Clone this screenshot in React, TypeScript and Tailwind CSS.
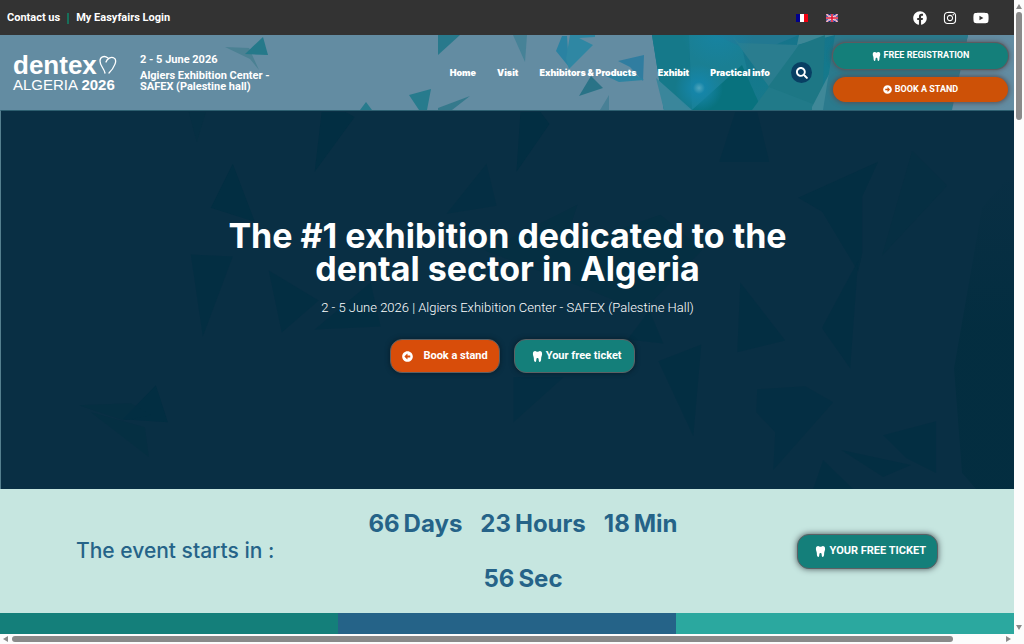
import { FaArrowAltCircleLeft, FaArrowAltCircleRight, FaFacebook, FaInstagram, FaSearch, FaYoutube } from "react-icons/fa";

const navItems = ["Home", "Visit", "Exhibitors & Products", "Exhibit", "Practical info"];

const countdown = [
  { value: "66", label: "Days" },
  { value: "23", label: "Hours" },
  { value: "18", label: "Min" },
  { value: "56", label: "Sec" },
];

function Tooth({ className }: { className: string }) {
  return (
    <svg viewBox="0 0 12 12" fill="currentColor" className={className} aria-hidden="true">
      <path d="M1 3.500C.8 1 2 0 3.500 0 4.500 0 5 .9 6 .9S7.500 0 8.500 0C10 0 11.200 1 11 3.500c-.1 1.500-1 2.500-1 4.500 0 2-.3 4-1.500 4S7.400 10 7.200 8.800C7 7.800 6.600 7.500 6 7.500s-1 .3-1.200 1.300C4.600 10 4.700 12 3.500 12S2 10 2 8c0-2-.9-3-1-4.500z" />
    </svg>
  );
}

function FrenchFlag() {
  return (
    <svg viewBox="0 0 12 8" className="h-2 w-3" aria-hidden="true">
      <rect width="4" height="8" fill="#00008c" />
      <rect x="4" width="4" height="8" fill="#fff" />
      <rect x="8" width="4" height="8" fill="#f00010" />
    </svg>
  );
}

function BritishFlag() {
  return (
    <svg viewBox="0 0 12 8" className="h-2 w-3" aria-hidden="true">
      <rect width="12" height="8" fill="#1c2488" />
      <path d="M0 0l12 8M12 0L0 8" stroke="#fff" strokeWidth="1.6" />
      <path d="M0 0l12 8M12 0L0 8" stroke="#e0304a" strokeWidth="0.6" />
      <path d="M6 0v8M0 4h12" stroke="#fff" strokeWidth="2.6" />
      <path d="M6 0v8M0 4h12" stroke="#e01030" strokeWidth="1.6" />
    </svg>
  );
}

function HeaderArt() {
  return (
    <svg
      viewBox="0 0 1014 75"
      preserveAspectRatio="none"
      className="absolute inset-0 h-full w-full"
      aria-hidden="true"
    >
      <defs>
        <linearGradient id="gem" x1="0" y1="0" x2="1" y2="1">
          <stop offset="0" stopColor="#18708a" />
          <stop offset="0.5" stopColor="#14798c" />
          <stop offset="1" stopColor="#28748a" />
        </linearGradient>
        <radialGradient id="glow">
          <stop offset="0" stopColor="#4fa5bd" />
          <stop offset="0.25" stopColor="#1585a8" />
          <stop offset="1" stopColor="#1585a8" stopOpacity="0" />
        </radialGradient>
        <radialGradient id="haze">
          <stop offset="0" stopColor="#1585a8" />
          <stop offset="1" stopColor="#1585a8" stopOpacity="0" />
        </radialGradient>
      </defs>
      <path d="M225 12l24 1 10 22-9-11z" fill="#4b8193" />
      <path d="M245 19l18-17 5 18z" fill="#25798a" />
      <path d="M438 0h22l-22 20z" fill="#28798c" />
      <path d="M513 0h14l-2 27z" fill="#468297" />
      <path d="M360 75l6-8 6 8zM409 60l22-6-4 21h-8z" fill="#277b8d" />
      <path d="M438 73l32-12-18 14h-14z" fill="#35798c" />
      <path d="M562 1h5l2 31-13-16z" fill="#2a82a2" />
      <path d="M570 0h25v2l-16 1 14 7-24 24-3-10z" fill="#2f87a3" />
      <path d="M579 61l12-20 12 12z" fill="#2a7387" />
      <path d="M618 26l26-6-1 26-13-14z" fill="#307da0" />
      <path d="M606 41l24-5 14 9-25 2z" fill="#2d84a2" />
      <path d="M600 75l9-15v15z" fill="#488096" />
      <path d="M652 0h316l-18 75H664z" fill="url(#gem)" />
      <path d="M652 0h37l3 75h-28z" fill="#15798a" />
      <path d="M656 43l8 32h28z" fill="#3a869b" />
      <path d="M689 0h50l8 34-55 41z" fill="#1a7f93" />
      <path d="M715 0h84l-44 18z" fill="#227891" />
      <path d="M731 0l39 53 29-43-60-2z" fill="#2a7d8f" />
      <path d="M799 0h36l-38 10z" fill="#3d8796" />
      <path d="M799 10l-31 42 54 23 3-75z" fill="#1d7785" />
      <path d="M742 30l20 45h-70z" fill="#08727e" />
      <path d="M752 75l17-23 44 17v6z" fill="#217a89" />
      <path d="M838 22l-26 50v3h20z" fill="#3f8898" />
      <path d="M835 0l-12 75h129l16-75z" fill="#2b7a8d" />
      <circle cx="718" cy="-3" r="36" fill="url(#haze)" opacity="0.7" />
      <circle cx="699" cy="53" r="24" fill="url(#glow)" />
    </svg>
  );
}

function HeroArt() {
  return (
    <svg
      viewBox="0 0 1014 379"
      preserveAspectRatio="none"
      className="absolute inset-0 h-full w-full"
      aria-hidden="true"
    >
      <defs>
        <linearGradient id="edge" x1="0" y1="0" x2="0" y2="1">
          <stop offset="0" stopColor="#022d3f" stopOpacity="0" />
          <stop offset="0.5" stopColor="#022d3f" />
        </linearGradient>
      </defs>
      <g fill="#022e42">
        <path d="M321 1h24l9 5-40 55zM232 53l22 58-44-14z" />
        <path d="M190 144l42 2-30 80zM268 160l50 30-37 32zM370 172l10 44-66 3z" opacity="0.8" />
        <path d="M155 275l12 37-45-3zM520 1l20 0 9 12-33 48z" />
        <path d="M486 53l10 42-50 8zM735 1l22 0 12 50-50 0z" opacity="0.6" />
        <path d="M798 87l80-36-16 35 0 57-4 18-36-60z" opacity="0.85" />
        <path d="M658 251l43-17-8 92zM649 200l14 33-36-4z" opacity="0.8" />
        <path d="M740 172l45 58-48 12zM823 215l35-65-8 108-28-40z" opacity="0.8" />
        <path d="M513 267h50l-50 45zM757 279l48-3 28 16-60 68 2-38-19-20z" opacity="0.6" />
        <path d="M883 325l53-14v52l-30-15zM841 340l70 15-28 12zM823 350l30 29h-40z" opacity="0.8" />
      </g>
      <g fill="#032f42" opacity="0.5">
        <path d="M78 295l52-2 20 12-28 5zM90 302l58 45-4-30z" />
        <path d="M912 40l35 35-65 70zM188 1l17 0-9 30z" />
        <path d="M485 140l92-46-15 45 98-35 42 35-60 62-62-25z" />
      </g>
      <path d="M1014 60l-32 37-8 46-20 115 8 105 14 16h38z" fill="url(#edge)" opacity="0.8" />
    </svg>
  );
}

function Logo() {
  return (
    <a
      href="#"
      aria-label="dentex Algeria 2026"
      className="flex w-[112px] shrink-0 flex-col pl-[5px] font-['Liberation_Sans',Arial,sans-serif] text-white"
    >
      <span className="flex items-center text-[26px] leading-[24px] font-bold">
        dentex
        <svg
          viewBox="0 0 18 20"
          className="ml-0.5 h-5 w-[18px] shrink-0"
          fill="none"
          stroke="#fff"
          strokeWidth="1.3"
          strokeLinecap="round"
          aria-hidden="true"
        >
          <path d="M6 18C5 13 1 11 1 6c0-4 4-6 8-3" />
          <path d="M7 7c1-3 5-6 8-4 4 2 0 10-5 15" />
        </svg>
      </span>
      <span className="text-[15px] leading-[15px] whitespace-nowrap">
        ALGERIA <b>2026</b>
      </span>
    </a>
  );
}

function VerticalScrollbar() {
  return (
    <div className="flex w-2.5 shrink-0 flex-col items-center bg-[#fcfcfc] py-1" aria-hidden="true">
      <svg viewBox="0 0 6 5" className="h-[5px] w-1.5"><path d="M3 0l3 5H0z" fill="#8a8a8a" /></svg>
      <div className="mt-[3px] h-[108px] w-1.5 rounded-full bg-[#8a8a8a]" />
      <svg viewBox="0 0 6 5" className="mt-auto h-[5px] w-1.5"><path d="M0 0h6L3 5z" fill="#8a8a8a" /></svg>
    </div>
  );
}

function HorizontalScrollbar() {
  return (
    <div className="flex h-2.5 items-center gap-1 bg-[#fcfcfc] pr-[13px] pl-[3px]" aria-hidden="true">
      <svg viewBox="0 0 5 6" className="h-1.5 w-[5px]"><path d="M5 0v6L0 3z" fill="#8a8a8a" /></svg>
      <div className="flex-1"><div className="h-1.5 w-[95%] rounded-full bg-[#8a8a8a]" /></div>
      <svg viewBox="0 0 5 6" className="h-1.5 w-[5px]"><path d="M0 0l5 3-5 3z" fill="#8a8a8a" /></svg>
    </div>
  );
}

export default function App() {
  return (
    <div className="flex h-screen flex-col overflow-hidden bg-[#fcfcfc] font-['Roboto','Inter',sans-serif]">
      <div className="flex min-h-0 flex-1">
        <div className="flex min-w-0 flex-1 flex-col">
          <div className="flex h-[35px] shrink-0 items-center justify-between bg-[#333] pr-[25px] pl-[7px] text-white">
            <div className="flex items-center pt-px text-[11px] font-bold">
              <a href="#">Contact us</a>
              <span className="mx-[7px] h-[11px] w-0.5 bg-[#17705a]" />
              <a href="#">My Easyfairs Login</a>
            </div>
            <div className="flex items-center">
              <a href="#" aria-label="Français"><FrenchFlag /></a>
              <a href="#" aria-label="English" className="ml-[18px]"><BritishFlag /></a>
              <a href="#" aria-label="Facebook" className="ml-[75px]"><FaFacebook className="size-3.5" /></a>
              <a href="#" aria-label="Instagram" className="ml-4"><FaInstagram className="size-3.5" /></a>
              <a href="#" aria-label="YouTube" className="ml-4"><FaYoutube className="size-4" /></a>
            </div>
          </div>

          <header className="relative h-[75px] shrink-0 bg-[#638ca2]">
            <HeaderArt />
            <div className="relative flex h-full items-center pl-2 text-white">
              <Logo />
              <div className="ml-5 w-[150px] shrink-0 text-[11px] leading-[11px] font-bold">
                <p>2 - 5 June 2026</p>
                <p className="mt-[5px]">Algiers Exhibition Center - SAFEX (Palestine hall)</p>
              </div>
              <nav className="ml-auto flex items-center gap-[21px] font-['Inter',sans-serif] text-[9px] font-black whitespace-nowrap">
                {navItems.map((item) => (
                  <a key={item} href="#">{item}</a>
                ))}
                <button aria-label="Search" className="flex size-[21px] items-center justify-center rounded-full bg-[#083f63]">
                  <FaSearch className="size-3" />
                </button>
              </nav>
              <div className="mr-1.5 ml-[21px] flex w-[175px] shrink-0 flex-col gap-2 text-[9px] font-bold">
                <a href="#" className="flex h-[26px] items-center justify-center gap-[3px] rounded-full bg-[#147f7a] shadow-[0_0_5px_1px_#554f55] ring-1 ring-[#5c5b60]">
                  <Tooth className="size-[9px]" /> FREE REGISTRATION
                </a>
                <a href="#" className="flex h-[25px] items-center justify-center gap-[3px] rounded-full bg-[#cd5107] shadow-[0_0_5px_1px_#554f55]">
                  <FaArrowAltCircleRight className="size-[9px]" /> BOOK A STAND
                </a>
              </div>
            </div>
          </header>

          <main className="flex min-h-0 flex-1 flex-col">
            <section className="relative h-[379px] shrink-0 border-t border-l border-t-[#2d5f70] border-l-[#55808f] bg-[#092f44]">
              <HeroArt />
              <div className="relative flex h-full flex-col items-center justify-center pb-2 text-center text-white">
                <h1 className="max-w-[600px] font-['Inter',sans-serif] text-[34px] leading-[33px] font-bold">
                  The #1 exhibition dedicated to the dental sector in Algeria
                </h1>
                <p className="mt-[13px] text-[13px] leading-5 font-light">
                  2 - 5 June 2026 | Algiers Exhibition Center - SAFEX (Palestine Hall)
                </p>
                <div className="mt-[21px] flex gap-[14px] pl-2.5 text-[11px] font-bold">
                  <a href="#" className="flex h-[34px] items-center gap-2.5 rounded-xl border border-[#5c6064] bg-[#d84d0a] px-[11px] shadow-[0_0_5px_#061c28]">
                    <FaArrowAltCircleLeft className="size-[11px]" /> Book a stand
                  </a>
                  <a href="#" className="flex h-[34px] items-center gap-[3px] rounded-xl border border-[#5c6064] bg-[#147f7a] pr-3 pl-[17px] shadow-[0_0_5px_#061c28]">
                    <Tooth className="size-[11px]" /> Your free ticket
                  </a>
                </div>
              </div>
            </section>

            <section className="grid h-[124px] shrink-0 grid-cols-3 items-center bg-[#c6e6e0] text-[#256388]">
              <h2 className="pl-[76px] font-['Inter',sans-serif] text-[21px] font-medium whitespace-nowrap">The event starts in :</h2>
              <div className="-mr-4 flex flex-wrap justify-center gap-x-[18px] gap-y-[22px] pl-4 font-['Inter',sans-serif] text-[24px] leading-[33px] font-bold">
                {countdown.map(({ value, label }) => (
                  <span key={label} className="flex gap-1">
                    <span>{value}</span>
                    <span>{label}</span>
                  </span>
                ))}
              </div>
              <div className="flex justify-end pr-[76px]">
                <a href="#" className="flex h-[35px] items-center gap-[3px] rounded-xl border border-[#5c6064] bg-[#147f7a] pr-[11px] pl-[17px] text-[11px] font-bold text-white shadow-[0_0_6px_#485458]">
                  <Tooth className="size-[11px]" /> YOUR FREE TICKET
                </a>
              </div>
            </section>

            <div className="grid flex-1 grid-cols-3">
              <div className="bg-[#147f7a]" />
              <div className="bg-[#256388]" />
              <div className="bg-[#2ba89f]" />
            </div>
          </main>
        </div>
        <VerticalScrollbar />
      </div>
      <HorizontalScrollbar />
    </div>
  );
}
